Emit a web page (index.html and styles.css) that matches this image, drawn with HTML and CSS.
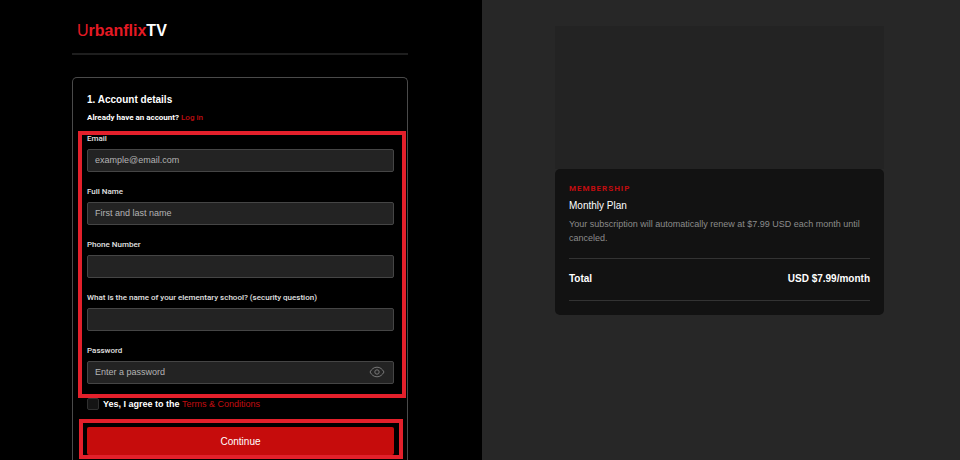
FILE: index.html
```html
<!DOCTYPE html>
<html lang="en">
<head>
<meta charset="utf-8">
<title>UrbanflixTV – Checkout</title>
<link rel="stylesheet" href="styles.css">
</head>
<body>
<div class="page">
  <main class="checkout">
    <header class="header"><span class="logo"><span class="logo-name"><span class="logo-initial">U</span>rbanflix</span>TV</span></header>
    <form class="card">
      <h1 class="title">1. Account details</h1>
      <p class="login">Already have an account? <a href="#">Log in</a></p>
      <div class="fields">
        <div class="field"><label for="email">Email</label><input id="email" type="email" placeholder="example@email.com"></div>
        <div class="field"><label for="name">Full Name</label><input id="name" type="text" placeholder="First and last name"></div>
        <div class="field"><label for="phone">Phone Number</label><input id="phone" type="tel"></div>
        <div class="field"><label for="school">What is the name of your elementary school? (security question)</label><input id="school" type="text"></div>
        <div class="field"><label for="password">Password</label>
          <div class="password"><input id="password" type="password" placeholder="Enter a password">
            <button class="reveal" type="button" aria-label="Show password"><svg viewBox="0 0 16 12" width="16" height="12" fill="none" stroke="currentColor"><path d="M1 6C2.6 3 5 1.2 8 1.2S13.400 3 15 6C13.400 9 11 10.800 8 10.800S2.600 9 1 6Z"/><circle cx="8" cy="6" r="2.200"/></svg></button>
          </div>
        </div>
      </div>
      <div class="terms"><input id="terms" type="checkbox"><label for="terms">Yes, I agree to the <a href="#">Terms &amp; Conditions</a></label></div>
      <div class="submit"><button class="continue" type="submit">Continue</button></div>
    </form>
  </main>
  <aside class="summary">
    <div class="preview"></div>
    <section class="plan">
      <p class="eyebrow">MEMBERSHIP</p>
      <h2 class="plan-name">Monthly Plan</h2>
      <p class="renewal">Your subscription will automatically renew at $7.99 USD each month until canceled.</p>
      <div class="total"><span>Total</span><span>USD $7.99/month</span></div>
    </section>
  </aside>
</div>
</body>
</html>
```
FILE: styles.css
```css
* { box-sizing: border-box; }
body {
  margin: 0;
  background: #000;
  color: #fff;
  font-family: "Liberation Sans", Arial, sans-serif;
}
h1, h2, p { margin: 0; }
input, button { font-family: inherit; }
a { color: #c20d10; text-decoration: none; }

.page {
  display: grid;
  grid-template-columns: 482fr 478fr;
  min-height: 100vh;
}

.checkout {
  display: flex;
  flex-direction: column;
  padding: 0 74px 0 72px;
}
.header {
  padding: 20px 5px 12px;
  border-bottom: 2px solid #1e1e1e;
}
.logo {
  display: block;
  font-size: 16px;
  line-height: 21px;
  font-weight: 700;
}
.logo-name { color: #e51a24; }
.logo-initial { font-weight: 400; }

.card {
  flex: 1;
  margin-top: 22px;
  padding: 15px 13px 4px 14px;
  border: 1px solid #4a4a4a;
  border-bottom: 0;
  border-radius: 5px 5px 0 0;
}
.title { font-size: 10px; line-height: 14px; }
.login, .field label, .eyebrow { font-family: Roboto, "Liberation Sans", sans-serif; }
.login {
  margin-top: 5px;
  font-size: 8px;
  line-height: 12px;
  font-weight: 700;
}
.login a { font-weight: 500; }

.fields {
  position: relative;
  display: grid;
  gap: 14px;
  margin-top: 9px;
}
.fields::after, .submit::after {
  content: "";
  position: absolute;
  border: 4px solid #e3202b;
  pointer-events: none;
}
.fields::after { inset: -2px -12px -14px -9px; }
.submit::after { inset: -8px -9px -4px -8px; }

.field { display: grid; gap: 4px; }
.field label {
  font-size: 8px;
  line-height: 12px;
  font-weight: 500;
  color: #e0e0e0;
}
.field input {
  display: block;
  width: 100%;
  height: 23px;
  padding: 0 7px 1px;
  border: 1px solid #454545;
  border-radius: 2px;
  background: #232323;
  color: #fff;
  font-size: 9px;
}
.field input::placeholder { color: #b4b4b4; }
.password { position: relative; }
.reveal {
  position: absolute;
  top: 0;
  bottom: 0;
  right: 9px;
  display: flex;
  align-items: center;
  padding: 0 0 1px;
  border: 0;
  background: none;
  color: #777;
}

.terms {
  display: flex;
  align-items: center;
  gap: 4px;
  margin-top: 14px;
  font-size: 9px;
  line-height: 12px;
  font-weight: 700;
}
.terms input {
  appearance: none;
  width: 12px;
  height: 12px;
  margin: 0;
  border: 1px solid #303030;
  border-radius: 2px;
  background: #141414;
}
.terms a { font-weight: 400; }

.submit { position: relative; margin-top: 17px; }
.continue {
  display: block;
  width: 100%;
  height: 28px;
  border: 0;
  border-radius: 2px;
  background: #c60c0c;
  color: #fff;
  font-size: 10px;
}

.summary {
  padding: 26px 76px 0 73px;
  background: #272727;
}
.preview { height: 143px; background: #232323; }
.plan {
  padding: 14px;
  border-radius: 5px;
  background: #121212;
}
.eyebrow {
  color: #c20d10;
  font-size: 8px;
  line-height: 12px;
  font-weight: 700;
  letter-spacing: 1px;
}
.plan-name {
  margin-top: 4px;
  font-size: 10px;
  line-height: 14px;
  font-weight: 400;
}
.renewal {
  margin-top: 4px;
  font-size: 9px;
  line-height: 14px;
  color: #8c8c8c;
}
.total {
  display: flex;
  justify-content: space-between;
  margin-top: 13px;
  padding: 13px 0 14px;
  border: solid #333;
  border-width: 1px 0;
  font-size: 10px;
  line-height: 14px;
  font-weight: 700;
}
```
